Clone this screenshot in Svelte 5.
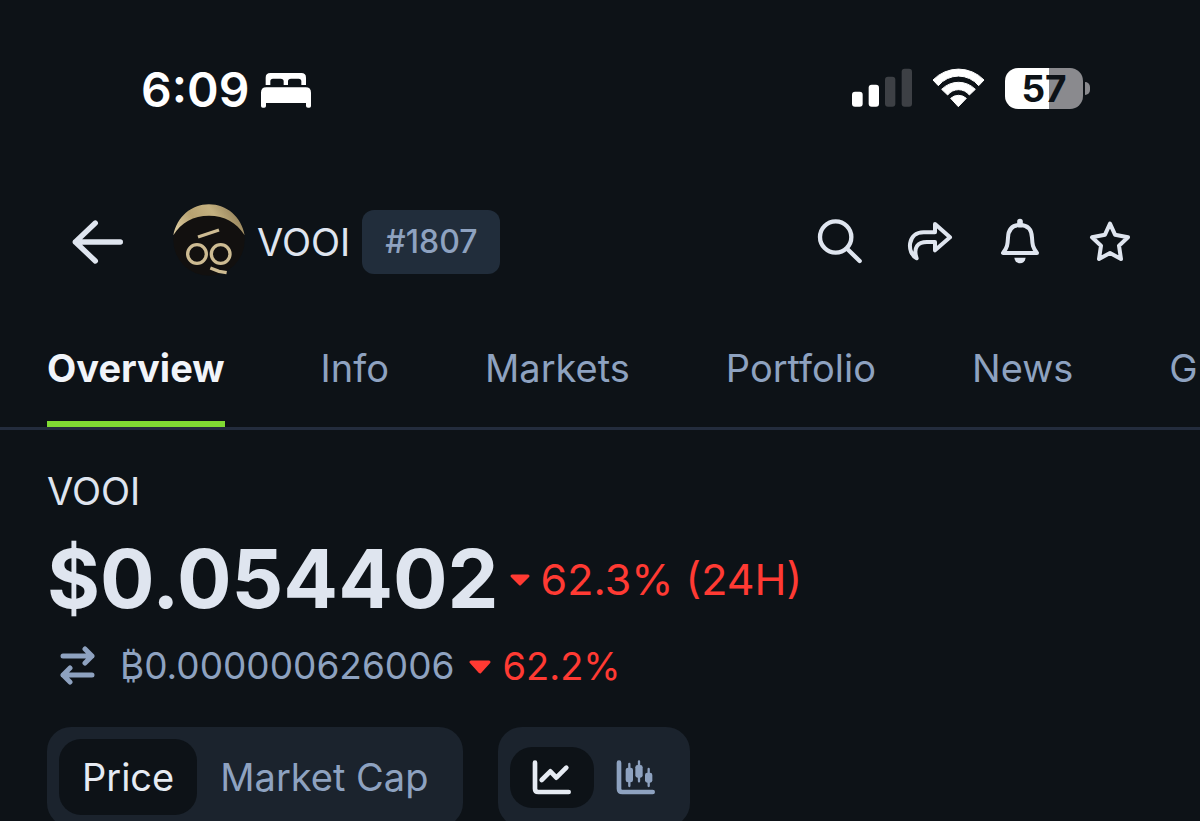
<script>
  const tabs = ['Overview', 'Info', 'Markets', 'Portfolio', 'News', 'G'];
  let activeTab = $state('Overview');
  let metric = $state('Price');
  let chart = $state('line');
</script>

<div class="app">
  <div class="status">
    <div class="clock">
      <span class="time">6:09</span>
      <svg width="52" height="36" viewBox="390 48 156 108" fill="#fff" aria-hidden="true">
        <path d="M407 87V65Q407 51 421 51H514Q528 51 528 65V87H514V76Q514 68 506 68H483Q474 68 474 76V87H461V76Q461 68 452 68H429Q421 68 421 76V87Z" />
        <path d="M393 110Q393 94 409 94H527Q543 94 543 110V150Q543 155 538 155H534Q528 155 528 150V141H408V150Q408 155 403 155H398Q393 155 393 150Z" />
      </svg>
    </div>
    <div class="signals">
      <svg width="60" height="40" viewBox="36 40 180 120" aria-hidden="true">
        <g fill="#fff">
          <rect x="36" y="111" width="32" height="45" rx="9" />
          <rect x="86" y="90" width="31" height="66" rx="9" />
        </g>
        <g fill="#3d4045">
          <rect x="135" y="66" width="31" height="90" rx="9" />
          <rect x="185" y="42" width="31" height="114" rx="9" />
        </g>
      </svg>
      <svg width="53" height="40" viewBox="276 38 159 120" fill="#fff" stroke="#fff" stroke-width="3" stroke-linejoin="round" aria-hidden="true">
        <path d="M279 74A106 106 0 0 1 432 74L416 91A78 78 0 0 0 295 91Z" />
        <path d="M305 102A71 71 0 0 1 406 102L388 119A41 41 0 0 0 323 119Z" />
        <path d="M332 129A35 35 0 0 1 379 129L355 154Z" />
      </svg>
      <div class="battery">
        <span class="cell">57</span>
        <span class="nub"></span>
      </div>
    </div>
  </div>

  <header>
    <button class="icon back" aria-label="Back">
      <svg width="52" height="48" viewBox="36 68 156 144" fill="none" stroke="currentColor" stroke-width="16" stroke-linecap="round" stroke-linejoin="round">
        <path d="M181 140H46M106 83L46 140L106 197" />
      </svg>
    </button>
    <svg width="72" height="76" viewBox="340 27 216 228" aria-hidden="true">
      <defs>
        <linearGradient id="hood" x1="0" x2="1" y1="0.6" y2="0.3">
          <stop offset="0" stop-color="#d8c79c" />
          <stop offset="0.3" stop-color="#b7a271" />
          <stop offset="0.6" stop-color="#c4b180" />
          <stop offset="1" stop-color="#8a7752" />
        </linearGradient>
      </defs>
      <circle cx="448" cy="135" r="107" fill="#12100f" />
      <path d="M341 121C352 65 395 28 448 28S545 65 555 121C530 82 495 62 448 62S365 82 341 121Z" fill="url(#hood)" />
      <g fill="none" stroke="#cdbb92" stroke-width="10">
        <circle cx="412" cy="177" r="28" />
        <circle cx="483" cy="177" r="28" />
        <path d="M415 126L478 105" />
        <path d="M452 219L478 229L501 233" />
      </g>
    </svg>
    <h1>VOOI</h1>
    <span class="rank">#1807</span>
    <div class="actions">
      <button class="icon" aria-label="Search">
        <svg width="60" height="60" viewBox="30 21 180 180" fill="none" stroke="currentColor" stroke-width="13" stroke-linecap="round">
          <circle cx="107" cy="96" r="47" />
          <path d="M142 132L179 168" />
        </svg>
      </button>
      <button class="icon" aria-label="Share">
        <svg width="60" height="60" viewBox="300 21 180 180" fill="none" stroke="currentColor" stroke-width="12" stroke-linecap="round" stroke-linejoin="round">
          <path d="M405 57L450 97L405 136V111H381C353 111 339 128 350 160C319 143 322 82 371 82H405Z" />
        </svg>
      </button>
      <button class="icon" aria-label="Alerts">
        <svg width="60" height="60" viewBox="30 21 180 180" fill="none" stroke="currentColor" stroke-width="12" stroke-linecap="round" stroke-linejoin="round">
          <path d="M120 50V59" stroke-width="17" />
          <path d="M69 144H171C158 128 157 118 156 98C155 73 142 60 120 60S85 73 84 98C83 118 82 128 69 144Z" />
          <path d="M103 158H137C135 169 129 175 120 175S105 169 103 158Z" fill="currentColor" stroke="none" />
        </svg>
      </button>
      <button class="icon" aria-label="Add to watchlist">
        <svg width="60" height="60" viewBox="300 21 180 180" fill="none" stroke="currentColor" stroke-width="12" stroke-linejoin="round">
          <path d="M390 56L405 89L444 97L417 122L423 162L390 144L357 162L363 122L336 97L375 89Z" />
        </svg>
      </button>
    </div>
  </header>

  <nav aria-label="Coin sections">
    {#each tabs as tab}
      <button class="tab" class:active={activeTab === tab} onclick={() => (activeTab = tab)}>{tab}</button>
    {/each}
  </nav>

  <main>
    <h2>VOOI</h2>
    <div class="price-row">
      <span class="price">$0.054402</span>
      <span class="change">
        <svg width="22" height="18" viewBox="0 -4 22 18" aria-hidden="true"><path d="M3 2H19L11 10Z" fill="currentColor" stroke="currentColor" stroke-width="3" stroke-linejoin="round" /></svg>
        62.3% (24H)
      </span>
    </div>
    <div class="btc-row">
      <svg width="36" height="40" viewBox="0 0 36 40" fill="none" stroke="currentColor" stroke-width="5" stroke-linecap="round" stroke-linejoin="round" aria-hidden="true">
        <path d="M3 10H32M25 3L32 10L25 17M32 29H3M10 22L3 29L10 36" />
      </svg>
      <span class="btc">₿0.000000626006</span>
      <span class="change small">
        <svg width="24" height="16" viewBox="0 -2 24 16" aria-hidden="true"><path d="M3 2H21L12 12Z" fill="currentColor" stroke="currentColor" stroke-width="3" stroke-linejoin="round" /></svg>
        62.2%
      </span>
    </div>
    <div class="controls">
      <div class="segment">
        {#each ['Price', 'Market Cap'] as m}
          <button class="option" class:active={metric === m} onclick={() => (metric = m)}>{m}</button>
        {/each}
      </div>
      <div class="segment">
        <button class="option glyph" class:active={chart === 'line'} aria-label="Line chart" onclick={() => (chart = 'line')}>
          <svg width="40" height="36" viewBox="140 134 120 108" fill="none" stroke="currentColor" stroke-width="14" stroke-linecap="round" stroke-linejoin="round">
            <path d="M149 142V220Q149 230 159 230H250" />
            <path d="M169 194L195 168L213 187L243 157" />
          </svg>
        </button>
        <button class="option glyph" class:active={chart === 'candle'} aria-label="Candlestick chart" onclick={() => (chart = 'candle')}>
          <svg width="40" height="36" viewBox="394 134 120 108" fill="none" stroke="currentColor" stroke-width="14" stroke-linecap="round" stroke-linejoin="round">
            <path d="M403 142V220Q403 230 413 230H504" />
            <path d="M434 146V212M463 138V198M492 161V212" stroke-width="7" />
            <g fill="currentColor" stroke="none">
              <rect x="423" y="157" width="22" height="44" rx="7" />
              <rect x="452" y="149" width="22" height="38" rx="7" />
              <rect x="481" y="172" width="22" height="30" rx="7" />
            </g>
          </svg>
        </button>
      </div>
    </div>
  </main>
</div>

<style>
  :global(body) {
    margin: 0;
    background: #0d1217;
  }
  .app {
    height: 100vh;
    overflow: hidden;
    background: #0d1217;
    color: #dfe5ef;
    font-family: Inter, 'Liberation Sans', sans-serif;
    font-size: 38px;
    line-height: 48px;
  }
  button {
    margin: 0;
    padding: 0;
    border: 0;
    background: none;
    color: inherit;
    font: inherit;
    cursor: pointer;
  }
  svg {
    display: block;
    flex: none;
  }
  h1,
  h2 {
    margin: 0;
    font-size: 38px;
    font-weight: 400;
  }
  .status {
    display: flex;
    align-items: center;
    justify-content: space-between;
    padding: 60px 110px 0 141px;
    height: 56px;
    color: #fff;
  }
  .clock,
  .signals {
    display: flex;
    align-items: center;
  }
  .clock {
    gap: 11px;
    padding-top: 3px;
  }
  .time {
    font-size: 48px;
    font-weight: 600;
  }
  .signals {
    gap: 20px;
  }
  .battery {
    display: flex;
    align-items: center;
    gap: 2px;
  }
  .cell {
    width: 78px;
    border-radius: 13px;
    background: linear-gradient(90deg, #fff 57%, #8a8a8e 57%);
    color: #0d1217;
    font-size: 37px;
    font-weight: 700;
    line-height: 41px;
    text-align: center;
  }
  .nub {
    width: 5px;
    height: 13px;
    border-radius: 0 5px 5px 0;
    background: #8a8a8e;
  }
  header {
    display: flex;
    align-items: center;
    margin-top: 86px;
    padding: 0 60px 0 72px;
    height: 80px;
  }
  .back {
    margin-right: 49px;
  }
  h1 {
    margin: 0 12px;
  }
  .rank {
    padding: 8px 23px;
    border-radius: 12px;
    background: #212d3b;
    color: #8ea2c0;
    font-size: 32px;
    font-weight: 500;
  }
  .actions {
    display: flex;
    gap: 30px;
    margin-left: auto;
  }
  nav {
    display: flex;
    gap: 96px;
    margin-top: 62px;
    padding: 0 47px;
    border-bottom: 3px solid #232c3d;
    overflow: hidden;
  }
  .tab {
    flex: none;
    padding-bottom: 29px;
    border-bottom: 6px solid transparent;
    color: #8ea2c0;
  }
  .tab.active {
    border-color: #80db33;
    color: #f1f4f9;
    font-weight: 700;
  }
  main {
    padding: 37px 47px 0;
  }
  .price-row,
  .btc-row,
  .change {
    display: flex;
    align-items: center;
  }
  .price-row {
    gap: 10px;
    margin-top: 20px;
  }
  .price {
    font-size: 81px;
    font-weight: 700;
    line-height: 88px;
  }
  .change {
    gap: 10px;
    color: #ff3a33;
    font-size: 43px;
  }
  .change.small {
    font-size: 38px;
  }
  .btc-row {
    margin-top: 19px;
    padding-left: 13px;
    color: #8ea2c0;
  }
  .btc {
    margin: 0 14px 0 24px;
    font-size: 37px;
  }
  .controls {
    display: flex;
    gap: 35px;
    margin-top: 37px;
  }
  .segment {
    display: flex;
    align-items: center;
    padding: 12px;
    border-radius: 24px;
    background: #1b232d;
  }
  .option {
    padding: 14px 23px;
    border-radius: 22px;
    color: #8ea2c0;
  }
  .glyph {
    padding: 13px 22px 12px;
  }
  .option.active {
    background: #0d1217;
    color: #e6ebf3;
  }
</style>
